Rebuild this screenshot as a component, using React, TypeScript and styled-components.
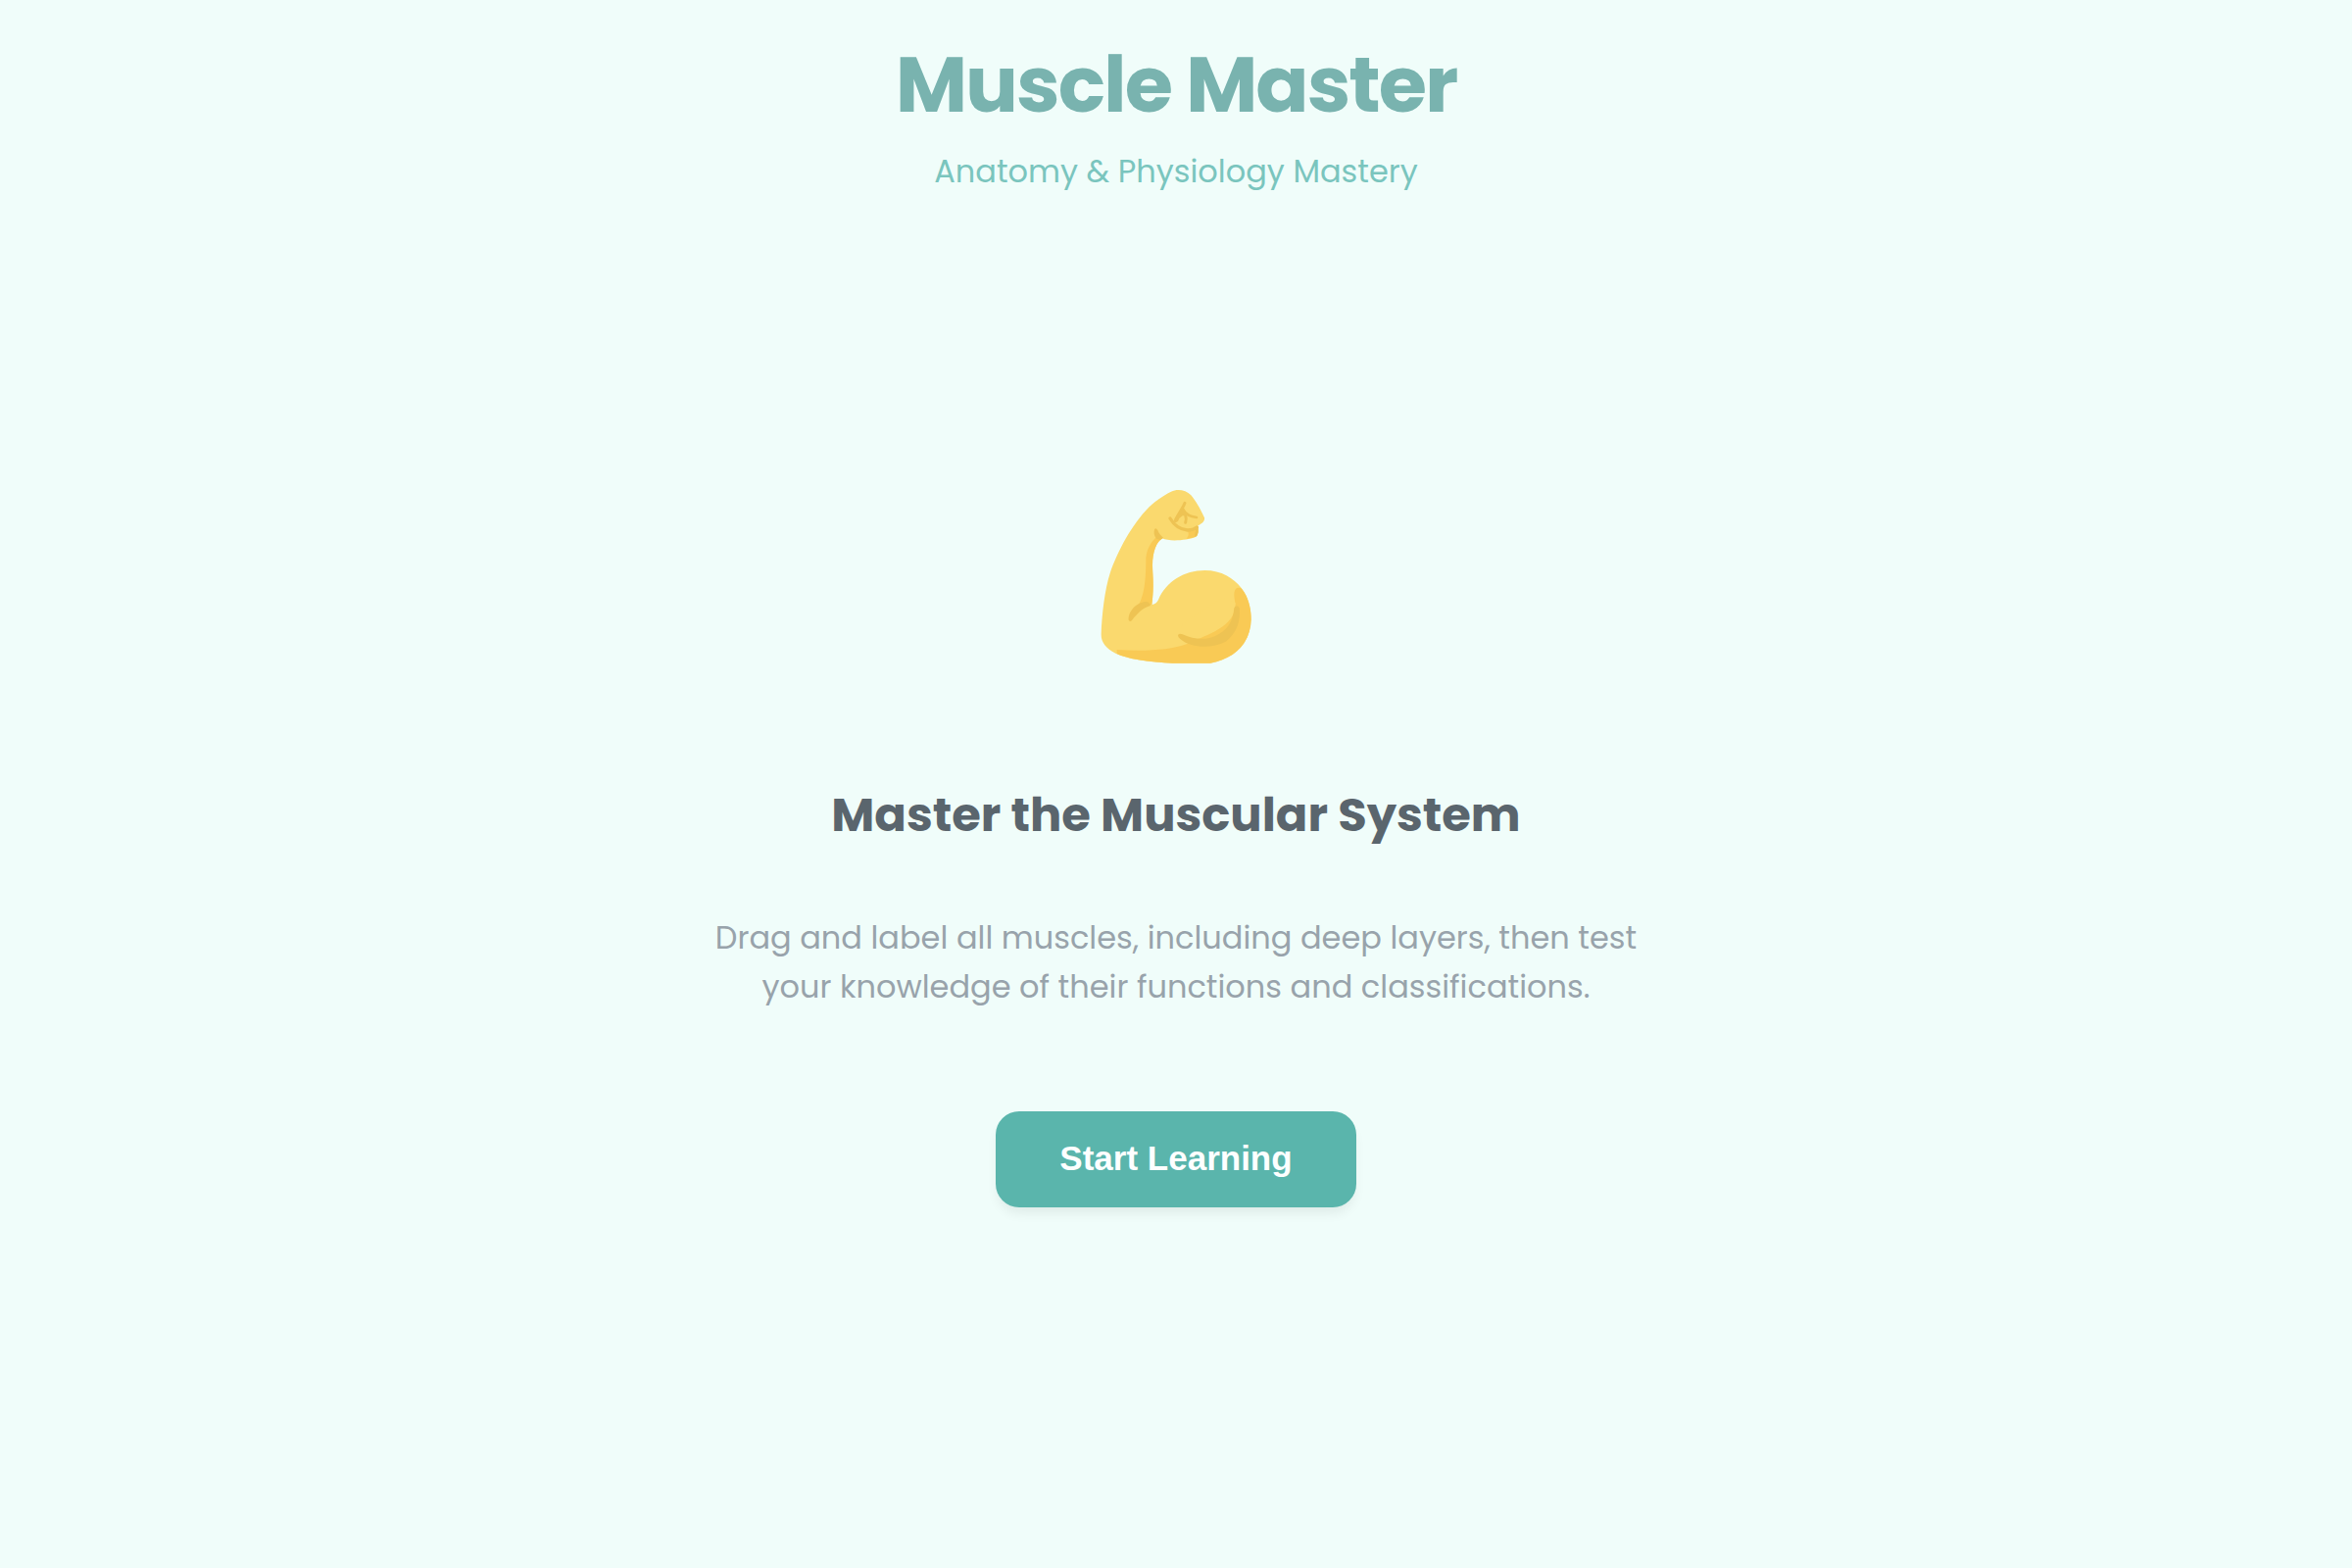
import React from "react";
import styled, { createGlobalStyle } from "styled-components";

const GlobalStyle = createGlobalStyle`
  *, *::before, *::after { box-sizing: border-box; }
  body {
    margin: 0;
    background: #f0fdfa;
    font-family: Poppins, Inter, sans-serif;
  }
`;

const Page = styled.div`
  min-height: 100vh;
  display: flex;
  flex-direction: column;
  align-items: center;
  text-align: center;
`;

const Header = styled.header`
  display: flex;
  flex-direction: column;
  gap: 16px;
  padding: 38px 32px 0;
`;

const Title = styled.h1`
  margin: 0;
  font-size: 80px;
  line-height: 96px;
  font-weight: 700;
  letter-spacing: -2px;
  color: #79b3af;
`;

const Subtitle = styled.p`
  margin: 0;
  font-size: 32px;
  line-height: 50px;
  color: #7ac5be;
`;

const Hero = styled.main`
  display: flex;
  flex-direction: column;
  align-items: center;
  padding: 296px 32px 64px;
`;

const Emoji = styled.svg`
  width: 160px;
  height: 184px;
  margin-bottom: 120px;
`;

const Heading = styled.h2`
  margin: 0 0 68px;
  font-size: 48px;
  line-height: 64px;
  font-weight: 700;
  color: #5a656d;
`;

const Description = styled.p`
  margin: 0 0 102px;
  max-width: 1000px;
  font-size: 32px;
  line-height: 50px;
  color: #98a3ab;
`;

const StartButton = styled.button`
  padding: 28px 65px 30px;
  border: 0;
  border-radius: 24px;
  background: #5ab5ac;
  color: #fdffff;
  font: 700 35px/40px "Liberation Sans", Arial, sans-serif;
  box-shadow: 0 8px 12px -2px rgba(0, 0, 0, 0.07);
  cursor: pointer;
`;

function FlexedArm() {
  return (
    <Emoji viewBox="60 48 480 552" role="img" aria-label="Flexed biceps">
      {/* arm silhouette */}
      <path
        fill="#fad96e"
        d="M71 500 C73 440 82 365 98 315 C120 250 165 165 218 112 C245 87 267 74 285 65 C305 56 330 60 346 76 C360 92 376 120 387 145 C389 155 380 163 367 169 C369 184 368 196 359 204 C335 214 280 219 258 208 C240 218 228 250 228 290 C228 320 234 350 226 411 C235 411 242 404 246 396 C270 340 325 306 388 306 C440 306 476 330 500 360 C520 385 530 420 530 455 C528 530 480 575 405 590 L290 590 C220 587 150 577 115 560 C85 545 70 525 71 500Z"
      />
      {/* underside of the upper arm and back of the biceps */}
      <path
        fill="#f9ca55"
        d="M119 549 C200 555 285 550 332 532 C400 500 480 480 482 410 C478 390 474 368 486 360 Q494 357 501 362 C520 385 530 420 530 455 C528 530 480 575 405 590 L290 590 C220 587 150 577 119 561Z"
      />
      <path
        fill="#fad96e"
        d="M310 503 C380 525 460 490 482 405 L440 390 L320 470Z"
      />
      {/* inner forearm */}
      <path
        fill="#f9ca55"
        d="M239 205 L260 208 C240 218 228 250 228 290 C228 320 234 350 226 411 L188 408 C206 370 208 320 208 268 C211 240 222 222 239 205Z"
      />
      {/* edge of the little finger */}
      <path
        fill="#f9ca55"
        d="M336 187 L367 176 C369 190 368 198 359 204 L332 209 Q342 198 336 187Z"
      />
      {/* creases at the elbow, the biceps and the wrist */}
      <g fill="#eec353">
        <path d="M155 458 C153 430 182 402 209 402 Q219 403 222 414 C198 421 182 437 165 459 Q159 465 155 458Z" />
        <path d="M306 505 Q309 498 320 502 C356 518 390 520 420 507 C456 492 475 463 478 421 Q486 408 494 421 C499 462 484 502 452 524 C410 547 344 544 313 516 Q306 511 306 505Z" />
        <path d="M234 181 Q238 174 244 183 C247 193 254 200 261 206 L251 213 L240 209 C232 200 232 190 234 181Z" />
      </g>
      {/* folded fingers */}
      <g
        fill="none"
        stroke="#eec353"
        strokeLinecap="round"
        strokeLinejoin="round"
      >
        <path strokeWidth="10" d="M282 147 C295 169 310 181 335 183 Q353 183 364 174" />
        <path strokeWidth="8" d="M364 174 Q365 190 361 198" />
        <path strokeWidth="9" d="M327 100 C320 120 306 130 298 155" />
        <path strokeWidth="8" d="M322 119 C330 137 346 141 363 144" />
        <path strokeWidth="9" d="M329 137 Q333 148 329 160" />
      </g>
      <path fill="#eec353" d="M320 115 L340 138 L320 139 Q309 145 306 156 L298 159 L295 148Z" />
    </Emoji>
  );
}

export default function App() {
  return (
    <Page>
      <GlobalStyle />
      <Header>
        <Title>Muscle Master</Title>
        <Subtitle>Anatomy &amp; Physiology Mastery</Subtitle>
      </Header>
      <Hero>
        <FlexedArm />
        <Heading>Master the Muscular System</Heading>
        <Description>
          Drag and label all muscles, including deep layers, then test your
          knowledge of their functions and classifications.
        </Description>
        <StartButton type="button">Start Learning</StartButton>
      </Hero>
    </Page>
  );
}
